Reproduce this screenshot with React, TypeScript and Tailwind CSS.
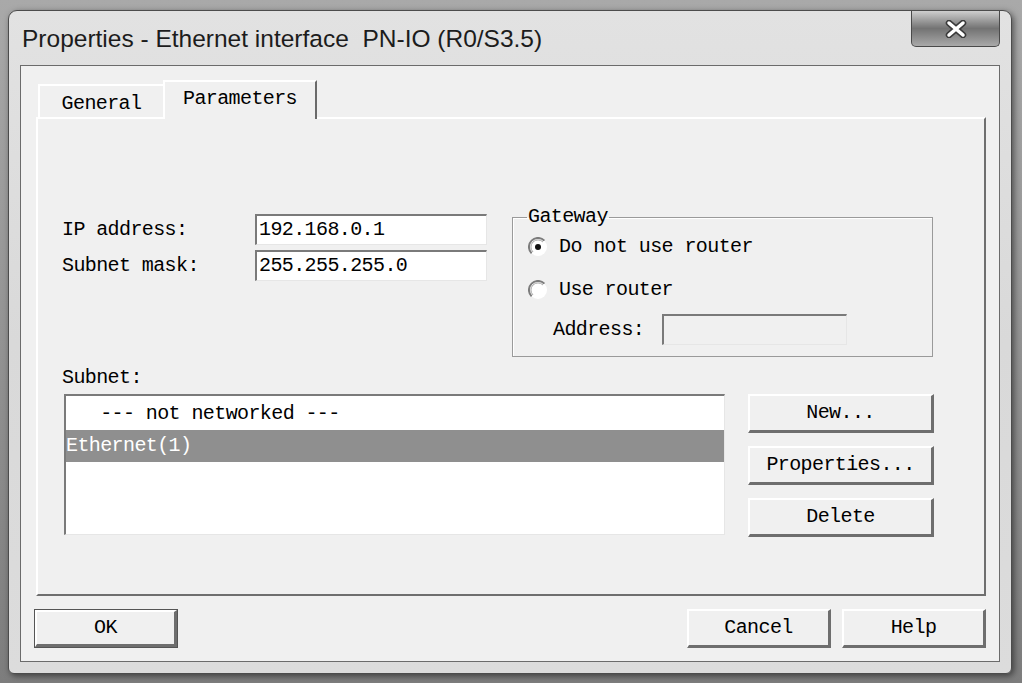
import React from 'react';

const mono = { fontFamily: '"Liberation Mono", "DejaVu Sans Mono", monospace' };

function Radio({ checked }: { checked?: boolean }) {
    return (
        <svg width="20" height="20" viewBox="0 0 20 20" className="shrink-0">
            <circle cx="10" cy="10" r="9" fill="#ffffff" />
            <path d="M3.6 16.4 A9 9 0 0 1 16.4 3.6" fill="none" stroke="#7c7c7c" strokeWidth="2" />
            <path d="M5 15 A7 7 0 0 1 15 5" fill="none" stroke="#a8a8a8" strokeWidth="1" />
            {checked && <circle cx="10" cy="10" r="3" fill="#111111" />}
        </svg>
    );
}

function Field({ value, className }: { value?: string; className: string }) {
    return (
        <div
            className={`flex h-[31px] items-center border-t-2 border-l-2 border-t-[#7a7a7a] border-l-[#7a7a7a] border-r border-b border-r-[#e6e6e6] border-b-[#e6e6e6] pl-[2px] text-[20px] tracking-[-0.6px] text-black ${className}`}
            style={mono}
        >
            {value}
        </div>
    );
}

function Btn({ label, wide, def }: { label: string; wide?: boolean; def?: boolean }) {
    return (
        <div className={`${wide ? 'w-[186px]' : 'w-[144px]'} h-[39px] ${def ? 'border border-[#555]' : ''}`} style={mono}>
            <div className="flex h-full w-full items-center justify-center border-t-2 border-l-2 border-t-white border-l-white border-r-[3px] border-b-[3px] border-r-[#6e6e6e] border-b-[#6e6e6e] bg-[#f0f0f0] text-[20px] tracking-[-0.6px] text-black">
                {label}
            </div>
        </div>
    );
}

export default function App() {
    return (
        <div className="flex h-[683px] w-[1022px] bg-gradient-to-b from-[#a9a9a9] to-[#7d7d7d] pt-[10px] pl-[8px] pr-[10px] pb-[9px]">
            <div className="flex flex-1 flex-col rounded-t-[9px] rounded-b-[6px] border border-[#4c4c4c] bg-gradient-to-b from-[#e2e2e2] via-[#d9d9d9] to-[#dcdcdc] shadow-[2px_2px_6px_rgba(0,0,0,0.5)]">
                {/* title bar */}
                <div className="flex h-[54px] items-start justify-between">
                    <div
                        className="self-center pl-[13px] pt-[3px] text-[24.5px] text-[#1c1c1c]"
                        style={{ fontFamily: '"Liberation Sans", Arial, sans-serif' }}
                    >
                        Properties - Ethernet interface&nbsp; PN-IO (R0/S3.5)
                    </div>
                    <div className="mr-[11px] flex h-[36px] w-[89px] items-center justify-center rounded-b-[5px] border border-t-0 border-[#4a4a4a] bg-gradient-to-b from-[#cfcfcf] via-[#737373] to-[#a9a9a9]">
                        <svg width="24" height="18" viewBox="0 0 24 18">
                            <path d="M5 3 L19 15 M19 3 L5 15" stroke="#3a3a3a" strokeWidth="6.5" strokeLinecap="round" />
                            <path d="M5 3 L19 15 M19 3 L5 15" stroke="#ffffff" strokeWidth="3.5" strokeLinecap="round" />
                        </svg>
                    </div>
                </div>

                {/* client area */}
                <div className="mx-[11px] mb-[11px] flex flex-1 flex-col border border-[#6b6b6b] bg-[#f0f0f0] pl-[15px] pr-[13px] pt-[14px]">
                    {/* tabs */}
                    <div className="relative z-10 -mb-[2px] flex h-[39px] items-end text-[20px] tracking-[-0.6px] text-black" style={mono}>
                        <div className="ml-[2px] flex h-[35px] w-[125px] items-center justify-center border-t-2 border-l-2 border-white pt-[2px]">
                            General
                        </div>
                        <div className="flex h-[39px] w-[154px] items-center justify-center border-t-2 border-l-2 border-white border-r-2 border-r-[#6a6a6a] bg-[#f0f0f0] pb-[4px]">
                            Parameters
                        </div>
                    </div>

                    {/* panel */}
                    <div
                        className="flex h-[479px] flex-col border-t-2 border-l-2 border-t-white border-l-white border-r-2 border-b-2 border-r-[#6e6e6e] border-b-[#6e6e6e] pl-[24px] pt-[88px] text-[20px] tracking-[-0.6px] text-black"
                        style={mono}
                    >
                        <div className="flex items-start">
                            <div className="mt-[7px] flex w-[450px] flex-col gap-[5px]">
                                <div className="flex items-center">
                                    <span className="w-[193px]">IP address:</span>
                                    <Field value="192.168.0.1" className="w-[232px] bg-white" />
                                </div>
                                <div className="flex items-center">
                                    <span className="w-[193px]">Subnet mask:</span>
                                    <Field value="255.255.255.0" className="w-[232px] bg-white" />
                                </div>
                            </div>

                            <fieldset className="h-[150px] w-[421px] border border-[#9a9a9a] pl-[15px] shadow-[inset_1px_1px_0_#ffffff]">
                                <legend className="-ml-[1px] px-[1px] leading-[20px]">Gateway</legend>
                                <div className="mt-[5px] flex h-[30px] items-center gap-[11px]">
                                    <Radio checked />
                                    <span>Do not use router</span>
                                </div>
                                <div className="mt-[13px] flex h-[30px] items-center gap-[11px]">
                                    <Radio />
                                    <span>Use router</span>
                                </div>
                                <div className="mt-[9px] flex items-center pl-[25px]">
                                    <span className="w-[109px]">Address:</span>
                                    <Field className="w-[185px] bg-[#f0f0f0]" />
                                </div>
                            </fieldset>
                        </div>

                        <div className="mt-[10px] leading-[22px]">Subnet:</div>

                        <div className="mt-[5px] flex items-start">
                            <div className="ml-[2px] h-[141px] w-[661px] border-t-2 border-l-2 border-t-[#7a7a7a] border-l-[#7a7a7a] border-r border-b border-r-[#e6e6e6] border-b-[#e6e6e6] bg-white pt-[2px]">
                                <div className="flex h-[32px] items-center whitespace-pre">   --- not networked ---</div>
                                <div className="flex h-[32px] items-center bg-[#8f8f8f] text-white">Ethernet(1)</div>
                            </div>
                            <div className="ml-[23px] flex flex-col gap-[13px]">
                                <Btn label="New..." wide />
                                <Btn label="Properties..." wide />
                                <Btn label="Delete" wide />
                            </div>
                        </div>
                    </div>

                    {/* bottom buttons */}
                    <div className="-ml-[2px] flex items-center pt-[13px]">
                        <Btn label="OK" def />
                        <div className="flex-1" />
                        <Btn label="Cancel" />
                        <div className="w-[11px]" />
                        <Btn label="Help" />
                    </div>
                </div>
            </div>
        </div>
    );
}
